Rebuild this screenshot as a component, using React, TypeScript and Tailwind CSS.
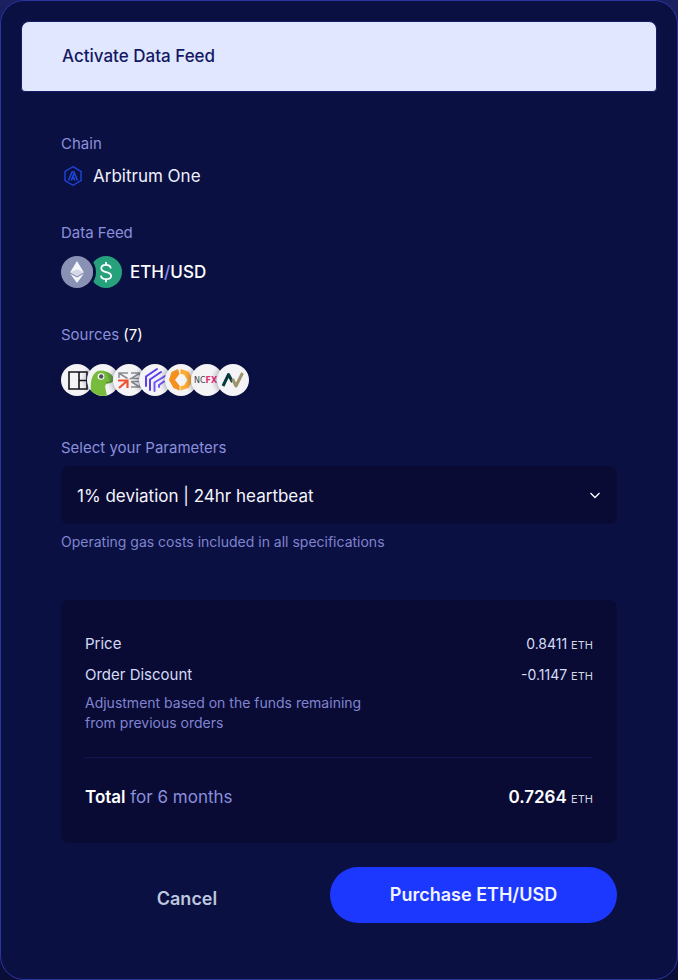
import type { ReactNode } from 'react';

const Coin = ({ children, label }: { children: ReactNode; label: string }) => (
  <svg viewBox="0 0 32 32" className="size-8 shrink-0" role="img" aria-label={label}>
    {children}
  </svg>
);

const sources: { name: string; art: ReactNode }[] = [
  {
    name: 'Frame',
    art: <path d="M8 8h18v17H8zM18 8v17M18 16.500h8" fill="none" stroke="#15151a" strokeWidth="1.6" />,
  },
  {
    name: 'CoinGecko',
    art: (
      <>
        <path d="M5 32C3 24 3 14 8 9c3-3 7-3 11-1.500 4 1.500 7 3.500 7.500 7 .5 3-2 4.500-5 5-3 .5-4 2-3 5L20 32z" fill="#78bb3d" />
        <path d="M17 8c5 0 9 3 9.500 6.500.3 2.500-1 3.800-3.500 4.500 0-4-2-8-6-11z" fill="#5f9f3e" opacity=".7" />
        <path d="M19 18c2 1 4 .5 6-1" stroke="#4b8434" strokeWidth=".8" fill="none" />
        <circle cx="14" cy="12.500" r="3.300" fill="#fff" />
        <circle cx="14.200" cy="12.500" r="2.200" fill="#4d535c" />
      </>
    ),
  },
  {
    name: 'Kaiko',
    art: (
      <>
        <path
          d="M6 14V9h9M6.500 9.500l8 5M18 9h9M27 9v5M26.500 9.500 18 14.500h9M18 17.500h9M18 17.500l8.500 5.500M27 18v5h-9"
          fill="none"
          stroke="#8b8c90"
          strokeWidth="1.500"
        />
        <path d="M5 16.500h9.500V24M14 17l-8 7" fill="none" stroke="#f0522f" strokeWidth="2.200" />
      </>
    ),
  },
  {
    name: 'Tiingo',
    art: (
      <g fill="none" stroke="#5b3fee" strokeWidth="2" strokeLinecap="round" strokeLinejoin="round">
        <path d="M7 22v-9.500L18 5" />
        <path d="M11 26V15.500L22 8" />
        <path d="M15.500 27v-8.500L26 12M20 23v-2l5-3.500" stroke="#7355fb" />
      </g>
    ),
  },
  {
    name: 'Coin Metrics',
    art: (
      <>
        <path d="M13 5 6.500 8 4 16l4.500 8 6 2.500v-5L10 16l4.500-6z" fill="#f58f1d" />
        <path d="m15.500 5 8 2.500L28 16l-4.500 8-8 2.500v-4.500l3.500-.500 3.500-5.500-3.500-5.500-3.500-.5z" fill="#ffac32" />
      </>
    ),
  },
  {
    name: 'NCFX',
    art: (
      <text x="3" y="19" fontSize="8" fontFamily="DejaVu Sans, sans-serif" fill="#414148">
        NC
        <tspan fill="#e62f76" fontWeight="700">
          FX
        </tspan>
      </text>
    ),
  },
  {
    name: 'NovaFi',
    art: (
      <g fill="none" strokeWidth="3" strokeLinejoin="round">
        <path d="m6 22 5.500-11.500L15.500 18" stroke="#09383d" />
        <path d="m15.500 15 3.500 7 6.500-13" stroke="#9d9467" />
      </g>
    ),
  },
];

function Amount({ value, strong = false }: { value: string; strong?: boolean }) {
  return (
    <dd className={strong ? 'text-[17px] leading-6 font-semibold text-white' : 'text-sm leading-6 text-[#d5dcf6]'}>
      {value} <span className="text-[11px] font-normal text-[#d5d7e3]">ETH</span>
    </dd>
  );
}

export default function App() {
  return (
    <div className="min-h-screen bg-linear-to-b from-[#1a2060] to-[#0a0d36] font-['Inter',sans-serif]">
      <main className="flex min-h-screen flex-col rounded-3xl border border-[#2b359f] bg-[#0a1041] p-5">
        <header className="rounded-t-lg rounded-b border border-[#171d68] bg-[#e0e7ff] px-10 py-[22px]">
          <h1 className="text-[17px] leading-[25px] font-medium text-[#141963]">Activate Data Feed</h1>
        </header>

        <div className="px-10 pt-10">
          <section>
            <h2 className="text-[15px] leading-6 text-[#8b8fdc]">Chain</h2>
            <p className="mt-2 flex h-6 items-center gap-2 text-[17px] leading-6 text-[#eef0fb]">
              <svg viewBox="0 0 24 24" className="size-6" fill="none" stroke="#1e46d8" aria-hidden="true">
                <path d="m12 2.700 8 4.600v9.400l-8 4.600-8-4.600V7.300z" strokeWidth="1.400" />
                <path d="m7.500 16.500 3.500-8.500h2l3.500 8.500M10.300 16.500 13 9.500M12.500 13l1.300 3.500" strokeWidth="1.600" />
              </svg>
              Arbitrum One
            </p>
          </section>

          <section className="mt-[33px]">
            <h2 className="text-[15px] leading-6 text-[#8b8fdc]">Data Feed</h2>
            <div className="mt-[11px] flex h-8 items-center">
              <div className="z-10 rounded-full ring-3 ring-[#0a1041]">
                <Coin label="Ether">
                  <circle cx="16" cy="16" r="16" fill="#8992b5" />
                  <path d="m16 5 6.800 11.200L16 20l-6.800-3.800z" fill="#f5f6fa" />
                  <path d="m16 13.200 6.800 3L16 20l-6.800-3.800z" fill="#d5d9e7" />
                  <path d="m16 21.500 6.800-3.800L16 27l-6.800-9.300z" fill="#f5f6fa" />
                </Coin>
              </div>
              <div className="-ml-[3px]">
                <Coin label="US dollar">
                  <circle cx="16" cy="16" r="16" fill="#27a17c" />
                  <path
                    d="M20.800 12.300c-.3-2.200-2-3.400-4.800-3.400s-4.700 1.300-4.700 3.500c0 4.800 9.800 2.400 9.800 7.300 0 2.200-2 3.500-5 3.500s-4.900-1.300-5.200-3.600M16 6v3M16 23v3.300"
                    fill="none"
                    stroke="#fff"
                    strokeWidth="1.800"
                  />
                </Coin>
              </div>
              <p className="ml-2 text-[17px] leading-6 font-medium text-white">
                ETH<span className="text-[#858af0]">/</span>USD
              </p>
            </div>
          </section>

          <section className="mt-[35px]">
            <h2 className="text-[15px] leading-6 text-[#8b8fdc]">
              Sources <span className="text-white">(7)</span>
            </h2>
            <ul className="mt-[17px] flex">
              {sources.map((source) => (
                <li
                  key={source.name}
                  className="-mr-1.5 size-8 overflow-hidden rounded-full bg-[#f4f4f6] shadow-[-2px_0_5px_rgba(15,20,60,0.3)]"
                >
                  <Coin label={source.name}>{source.art}</Coin>
                </li>
              ))}
            </ul>
          </section>

          <section className="mt-10">
            <label htmlFor="parameters" className="block text-[15px] leading-6 text-[#8b8fdc]">
              Select your Parameters
            </label>
            <div className="mt-1.5 grid items-center">
              <select
                id="parameters"
                className="col-start-1 row-start-1 h-[58px] w-full appearance-none rounded-lg bg-[#090b35] px-4 pt-1 text-[17px] text-[#f4f5fb]"
              >
                <option>1% deviation | 24hr heartbeat</option>
              </select>
              <svg
                viewBox="0 0 12 12"
                className="pointer-events-none col-start-1 row-start-1 mr-4 size-3 justify-self-end"
                fill="none"
                stroke="#fff"
                strokeWidth="1.300"
                aria-hidden="true"
              >
                <path d="m1.500 4 4.500 4.500L10.500 4" />
              </svg>
            </div>
            <p className="mt-2 text-sm leading-5 text-[#8084d0]">Operating gas costs included in all specifications</p>
          </section>

          <dl className="mt-12 rounded-lg bg-[#090b35] px-6 py-8">
            <div className="flex justify-between">
              <dt className="text-[15px] leading-6 text-[#d5dcf6]">Price</dt>
              <Amount value="0.8411" />
            </div>
            <div className="mt-1.5 flex justify-between">
              <dt className="text-[15px] leading-6 text-[#d5dcf6]">
                Order Discount
                <p className="mt-1.5 text-sm leading-5 text-[#8084d0]">
                  Adjustment based on the funds remaining
                  <br />
                  from previous orders
                </p>
              </dt>
              <Amount value="-0.1147" />
            </div>
            <div className="mt-6 flex justify-between border-t border-[#111653] pt-[27px]">
              <dt className="text-[17px] leading-6 text-[#8b8fdc]">
                <strong className="font-semibold text-white">Total</strong> for 6 months
              </dt>
              <Amount value="0.7264" strong />
            </div>
          </dl>

          <div className="mt-6 grid grid-cols-[252px_1fr] gap-[17px]">
            <button type="button" className="pt-2 text-lg leading-6 font-semibold text-[#bdc7df]">
              Cancel
            </button>
            <button type="button" className="h-14 rounded-full bg-[#1c38ff] text-lg leading-6 font-semibold text-[#f1f3ff]">
              Purchase ETH/USD
            </button>
          </div>
        </div>
      </main>
    </div>
  );
}
